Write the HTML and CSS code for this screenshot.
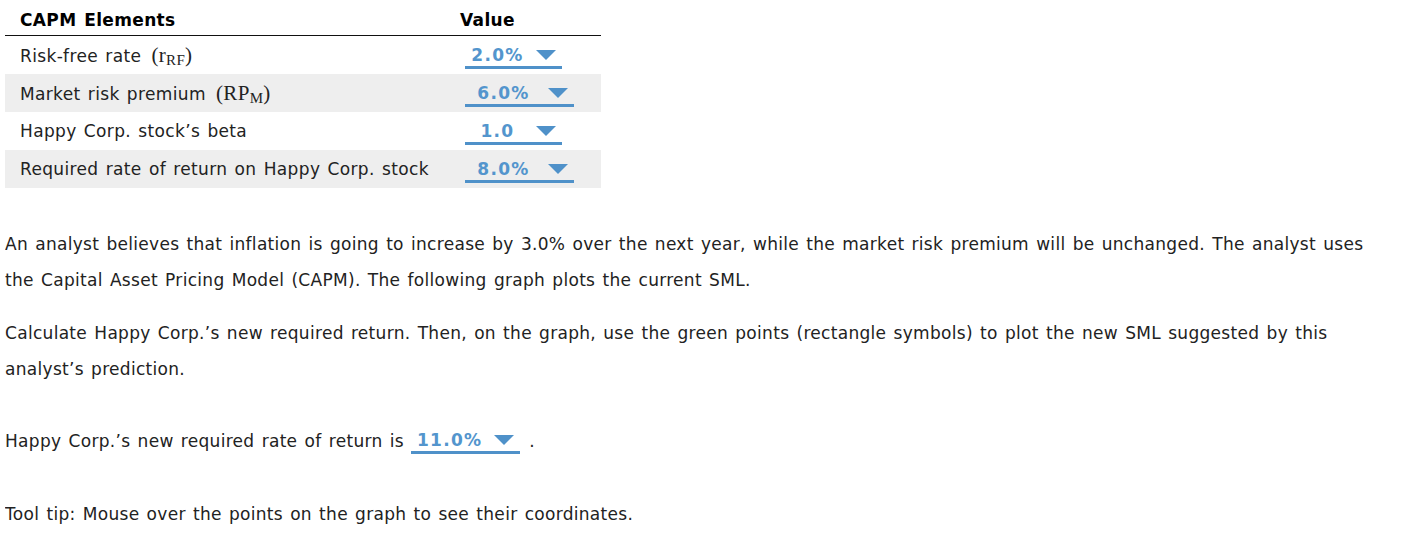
FILE: index.html
```html
<!DOCTYPE html>
<html>
<head>
<meta charset="utf-8">
<link rel="stylesheet" href="styles.css">
</head>
<body>
<div class="capm">
  <div class="row head">
    <div class="c1">CAPM Elements</div>
    <div class="c2">Value</div>
  </div>
  <div class="row">
    <div class="c1">Risk-free rate <span class="math">(r<sub>RF</sub>)</span></div>
    <div class="c2"><span class="dd"><span class="dd-val w1">2.0%</span><span class="tri"></span></span></div>
  </div>
  <div class="row alt">
    <div class="c1">Market risk premium <span class="math">(RP<sub>M</sub>)</span></div>
    <div class="c2"><span class="dd"><span class="dd-val w2">6.0%</span><span class="tri"></span></span></div>
  </div>
  <div class="row">
    <div class="c1">Happy Corp. stock’s beta</div>
    <div class="c2"><span class="dd"><span class="dd-val w1">1.0</span><span class="tri"></span></span></div>
  </div>
  <div class="row alt">
    <div class="c1">Required rate of return on Happy Corp. stock</div>
    <div class="c2"><span class="dd"><span class="dd-val w2">8.0%</span><span class="tri"></span></span></div>
  </div>
</div>

<p class="para p1">An analyst believes that inflation is going to increase by 3.0% over the next year, while the market risk premium will be unchanged. The analyst uses the Capital Asset Pricing Model (CAPM). The following graph plots the current SML.</p>
<p class="para p2">Calculate Happy Corp.’s new required return. Then, on the graph, use the green points (rectangle symbols) to plot the new SML suggested by this analyst’s prediction.</p>
<p class="para p3">Happy Corp.’s new required rate of return is <span class="dd"><span class="dd-val w2">11.0%</span><span class="tri"></span></span><span class="dot">.</span></p>
<p class="para p4">Tool tip: Mouse over the points on the graph to see their coordinates.</p>
</body>
</html>
```

FILE: styles.css
```css
html, body {
  background: #ffffff;
}
body {
  margin: 0 5px;
  font-family: "DejaVu Sans", Verdana, sans-serif;
  font-size: 17px;
  color: #222222;
}
.capm {
  width: 596px;
  letter-spacing: 0.35px;
  word-spacing: 1.5px;
}
.row {
  display: grid;
  grid-template-columns: 440px 1fr;
  height: 38px;
  align-items: center;
}
.row.alt {
  background: #eeeeee;
}
.row.head {
  height: 36px;
  border-bottom: 1px solid #111111;
  font-weight: bold;
  color: #000000;
  padding-top: 4px;
  box-sizing: border-box;
}
.c1 {
  padding-left: 15px;
  white-space: nowrap;
}
.c2 {
  padding-left: 20px;
}
.head .c2 {
  padding-left: 15px;
}
.math {
  margin-left: 3px;
  font-family: "Liberation Serif", "DejaVu Serif", serif;
  font-size: 21px;
  word-spacing: 0;
  letter-spacing: 0.3px;
}
.math sub {
  font-size: 15px;
  vertical-align: -3px;
  line-height: 0;
}
.dd {
  display: inline-flex;
  align-items: flex-start;
  height: 28px;
  box-sizing: border-box;
  border-bottom: 3px solid #4f91c9;
  vertical-align: middle;
  color: #5395cd;
  font-weight: bold;
  font-size: 17px;
  letter-spacing: 1.3px;
  word-spacing: 0;
}
.dd-val {
  display: block;
  text-align: center;
  padding-top: 4px;
  line-height: 21px;
}
.dd-val.w1 {
  width: 65px;
}
.dd-val.w2 {
  width: 77px;
}
.tri {
  display: block;
  width: 0;
  height: 0;
  margin: 9px 6px 0 6px;
  border-left: 10.5px solid transparent;
  border-right: 10.5px solid transparent;
  border-top: 10px solid #4f91c9;
}
.para {
  width: 1380px;
  margin: 0;
  line-height: 36px;
  letter-spacing: 0.3px;
  word-spacing: 1.5px;
}
.p1 {
  margin-top: 38px;
}
.p2 {
  margin-top: 17px;
}
.p3 {
  margin-top: 36px;
}
.p3 .dd {
  margin-top: -4px;
}
.dot {
  margin-left: 9px;
}
.p4 {
  margin-top: 37px;
}
```
